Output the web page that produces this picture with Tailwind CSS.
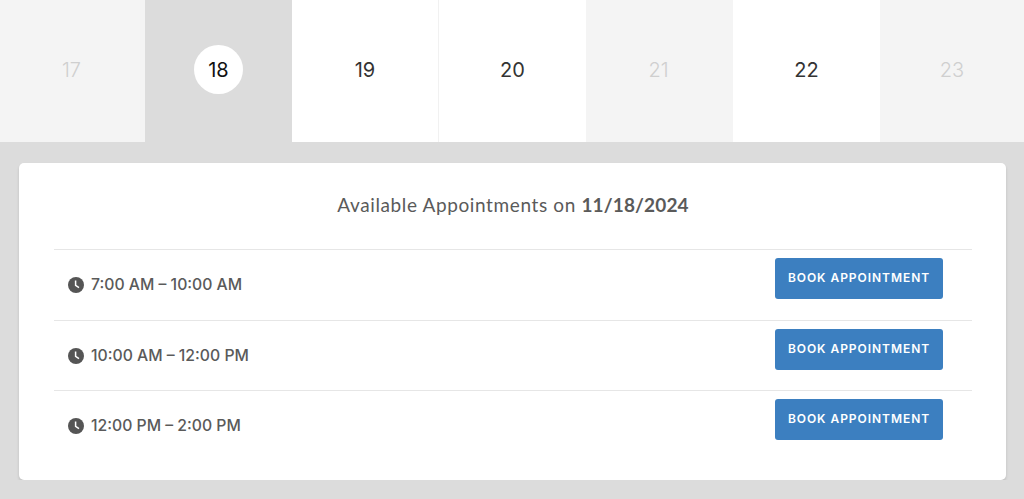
<!DOCTYPE html>
<html lang="en">

<head>
  <meta charset="UTF-8">
  <title>Appointments</title>
  <script src="https://cdn.jsdelivr.net/npm/@tailwindcss/browser@4"></script>
</head>

<body class="bg-[#dcdcdc] font-['Inter',sans-serif] overflow-hidden">
  <!-- Day strip -->
  <div class="grid grid-cols-[145px_147px_147px_147px_147px_147px_144px] h-[142px] text-[20px] font-['Inter',sans-serif] font-light">
    <div class="bg-[#f4f4f4] flex items-center justify-center pb-[3px] pr-[2px] text-[#cfcfcf]">17</div>
    <div class="bg-[#dcdcdc] flex items-center justify-center pb-[3px]">
      <span class="w-[49px] h-[49px] rounded-full bg-white flex items-center justify-center text-[#111] font-normal">18</span>
    </div>
    <div class="bg-white border-r border-[#f1f1f1] flex items-center justify-center pb-[3px] text-[#333] font-normal">19</div>
    <div class="bg-white flex items-center justify-center pb-[3px] text-[#333] font-normal">20</div>
    <div class="bg-[#f4f4f4] flex items-center justify-center pb-[3px] pr-[2px] text-[#cfcfcf]">21</div>
    <div class="bg-white flex items-center justify-center pb-[3px] text-[#333] font-normal">22</div>
    <div class="bg-[#f4f4f4] flex items-center justify-center pb-[3px] text-[#cfcfcf]">23</div>
  </div>

  <!-- Appointments card -->
  <div class="mt-[21px] ml-[19px] w-[987px] h-[317px] bg-white rounded-[5px] shadow-[0_2px_3px_rgba(0,0,0,0.14)] pl-[35px] pr-[34px]">
    <h2 class="h-[86px] pt-[28px] text-center text-[19px] leading-[27px] text-[#5a5a5a] font-['Lato',sans-serif] tracking-[0.62px]">
      Available Appointments on <strong class="font-bold tracking-[0.15px]">11/18/2024</strong>
    </h2>

    <div class="border-t border-[#e6e6e6] h-[71px] flex justify-between pl-[14px] pr-[29px] pt-[7.5px]">
      <div class="flex items-center gap-[7px] h-[54px] text-[#5a5a5a] text-[15.75px] font-medium">
        <svg class="w-4 h-4" viewBox="0 0 16 16"><circle cx="8" cy="8" r="8" fill="#555"/><path d="M7.6 3.4v5l3.4 2.2" fill="none" stroke="#fff" stroke-width="1.5"/></svg>
        7:00 AM – 10:00 AM
      </div>
      <button class="w-[168px] h-[41px] pb-[1px] bg-[#3c7fc0] rounded-[3px] text-white text-[12px] font-semibold tracking-[0.95px]">BOOK APPOINTMENT</button>
    </div>

    <div class="border-t border-[#e6e6e6] h-[70px] flex justify-between pl-[14px] pr-[29px] pt-[7.5px]">
      <div class="flex items-center gap-[7px] h-[54px] text-[#5a5a5a] text-[15.75px] font-medium">
        <svg class="w-4 h-4" viewBox="0 0 16 16"><circle cx="8" cy="8" r="8" fill="#555"/><path d="M7.6 3.4v5l3.4 2.2" fill="none" stroke="#fff" stroke-width="1.5"/></svg>
        10:00 AM – 12:00 PM
      </div>
      <button class="w-[168px] h-[41px] pb-[1px] bg-[#3c7fc0] rounded-[3px] text-white text-[12px] font-semibold tracking-[0.95px]">BOOK APPOINTMENT</button>
    </div>

    <div class="border-t border-[#e6e6e6] h-[70px] flex justify-between pl-[14px] pr-[29px] pt-[7.5px]">
      <div class="flex items-center gap-[7px] h-[54px] text-[#5a5a5a] text-[15.75px] font-medium">
        <svg class="w-4 h-4" viewBox="0 0 16 16"><circle cx="8" cy="8" r="8" fill="#555"/><path d="M7.6 3.4v5l3.4 2.2" fill="none" stroke="#fff" stroke-width="1.5"/></svg>
        12:00 PM – 2:00 PM
      </div>
      <button class="w-[168px] h-[41px] pb-[1px] bg-[#3c7fc0] rounded-[3px] text-white text-[12px] font-semibold tracking-[0.95px]">BOOK APPOINTMENT</button>
    </div>
  </div>
</body>

</html>
